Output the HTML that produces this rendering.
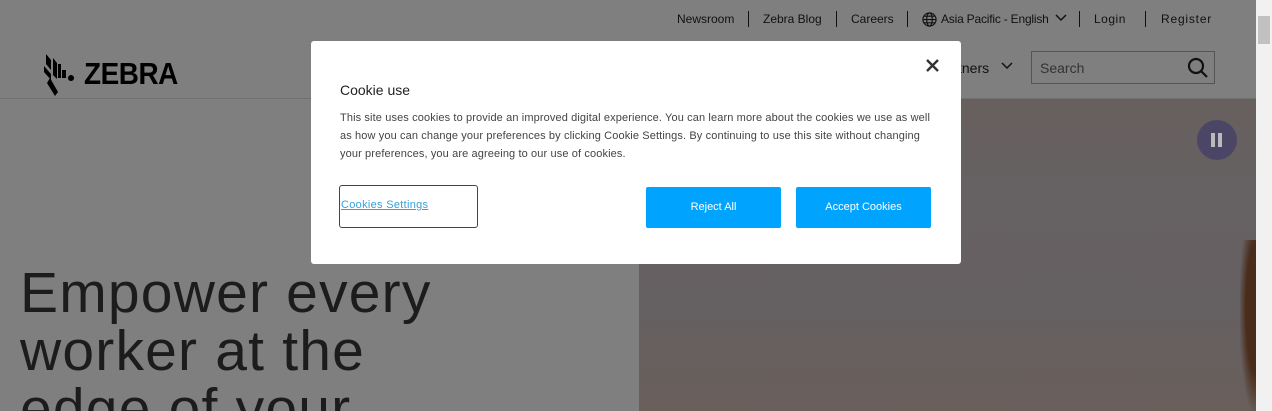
<!DOCTYPE html>
<html style="overflow:hidden;height:411px"><head><meta charset="utf-8"><style>
*{margin:0;padding:0;box-sizing:border-box}
body{width:1272px;height:411px;overflow:hidden;background:#7f7f7f;font-family:"Liberation Sans",sans-serif;position:relative}
.top{position:absolute;top:12px;font-size:12px;color:#111}
.sep{position:absolute;top:11px;width:1px;height:16px;background:#111}
.hline{position:absolute;left:0;top:98px;width:1256px;height:1px;background:#707070}
.photo{position:absolute;left:639px;top:99px;width:617px;height:312px;background:linear-gradient(180deg,#67605e 0%,#666162 30%,#656061 70%,#6a5f5b 100%)}
h1{position:absolute;left:20px;top:264px;width:600px;height:147px;overflow:hidden;font-size:57px;font-weight:normal;line-height:58px;color:#1c1c1c;letter-spacing:1.2px;white-space:nowrap}
.sb{position:absolute;left:1256px;top:0;width:16px;height:411px;background:#f1f1f1}
.thumb{position:absolute;left:1258px;top:16px;width:12px;height:28px;background:#c1c1c1}
.modal{position:absolute;left:311px;top:41px;width:650px;height:223px;background:#fff;border-radius:3px}
.btn{position:absolute;top:146px;height:41px;background:#00a4ff;color:#fff;font-size:11px;text-align:center;line-height:41px;border-radius:2px}
</style></head><body>
<div class="top" style="left:677px">Newsroom</div><div class="sep" style="left:748px"></div>
<div class="top" style="left:763px">Zebra Blog</div><div class="sep" style="left:836px"></div>
<div class="top" style="left:851px">Careers</div><div class="sep" style="left:907px"></div>
<svg style="position:absolute;left:922px;top:12px" width="15" height="15" viewBox="0 0 16 16" fill="none" stroke="#111" stroke-width="1.2"><circle cx="8" cy="8" r="7"/><ellipse cx="8" cy="8" rx="3" ry="7"/><path d="M1 8h14M2 4.5h12M2 11.5h12"/></svg>
<div class="top" style="left:941px;letter-spacing:-0.2px">Asia Pacific - English</div>
<svg style="position:absolute;left:1055px;top:14px" width="12" height="8" viewBox="0 0 12 8"><path d="M1 1l5 5 5-5" fill="none" stroke="#111" stroke-width="1.5"/></svg>
<div class="sep" style="left:1079px"></div>
<div class="top" style="left:1094px;letter-spacing:.5px">Login</div><div class="sep" style="left:1145px"></div>
<div class="top" style="left:1161px;letter-spacing:.8px">Register</div>
<svg style="position:absolute;left:44px;top:52px" width="34" height="45" viewBox="0 0 34 45" fill="#000"><path d="M2 2l5 6v10l-5-6zM0 14l7 8v6l-7-8zM6 26l8 14-3 4-8-13zM9 6l4 5v16l-4-4zM14 12h3v14h-3zM18 18h4v8h-4zM24 26a3 3 0 1 1 0 .1z"/></svg>
<div style="position:absolute;left:84px;top:56px;font-size:31px;font-weight:bold;color:#000;letter-spacing:-0.5px;transform:scaleX(.9);transform-origin:left">ZEBRA</div>
<div style="position:absolute;left:958px;top:60px;font-size:14px;color:#111">tners</div>
<svg style="position:absolute;left:1001px;top:62px" width="12" height="8" viewBox="0 0 12 8"><path d="M1 1l5 5 5-5" fill="none" stroke="#111" stroke-width="1.5"/></svg>
<div style="position:absolute;left:1031px;top:51px;width:184px;height:33px;border:1px solid #555"></div>
<div style="position:absolute;left:1040px;top:60px;font-size:14px;color:#333">Search</div>
<svg style="position:absolute;left:1187px;top:57px" width="22" height="22" viewBox="0 0 22 22" fill="none" stroke="#111" stroke-width="2.2"><circle cx="9" cy="9" r="7"/><path d="M14 14l6 6"/></svg>
<div class="hline"></div>
<div class="photo"></div>
<div style="position:absolute;left:1240px;top:240px;width:16px;height:171px;background:radial-gradient(ellipse at 100% 40%,#4a2c1a 45%,transparent 75%)"></div>
<div style="position:absolute;left:1197px;top:120px;width:40px;height:40px;border-radius:50%;background:#4c4666"></div>
<div style="position:absolute;left:1211px;top:133px;width:4px;height:14px;background:#bbb"></div>
<div style="position:absolute;left:1218px;top:133px;width:4px;height:14px;background:#bbb"></div>
<h1>Empower every<br>worker at the<br>edge of your</h1>
<div class="sb"></div><div class="thumb"></div>
<div class="modal">
<div style="position:absolute;left:29px;top:41px;font-size:14px;color:#222">Cookie use</div>
<svg style="position:absolute;left:615px;top:18px" width="13" height="13" viewBox="0 0 13 13"><path d="M1 1l11 11M12 1L1 12" stroke="#333" stroke-width="2.4"/></svg>
<div style="position:absolute;left:29px;top:68px;width:600px;font-size:11px;line-height:18px;color:#444;letter-spacing:0.12px">This site uses cookies to provide an improved digital experience. You can learn more about the cookies we use as well as how you can change your preferences by clicking Cookie Settings. By continuing to use this site without changing your preferences, you are agreeing to our use of cookies.</div>
<div style="position:absolute;left:28px;top:144px;width:139px;height:43px;border:1px solid #444;border-radius:3px"></div>
<div style="position:absolute;left:30px;top:158px;font-size:11px;color:#3a9fd8;text-decoration:underline;letter-spacing:.3px">Cookies Settings</div>
<div class="btn" style="left:335px;width:135px">Reject All</div>
<div class="btn" style="left:485px;width:135px">Accept Cookies</div>
</div>
</body></html>
